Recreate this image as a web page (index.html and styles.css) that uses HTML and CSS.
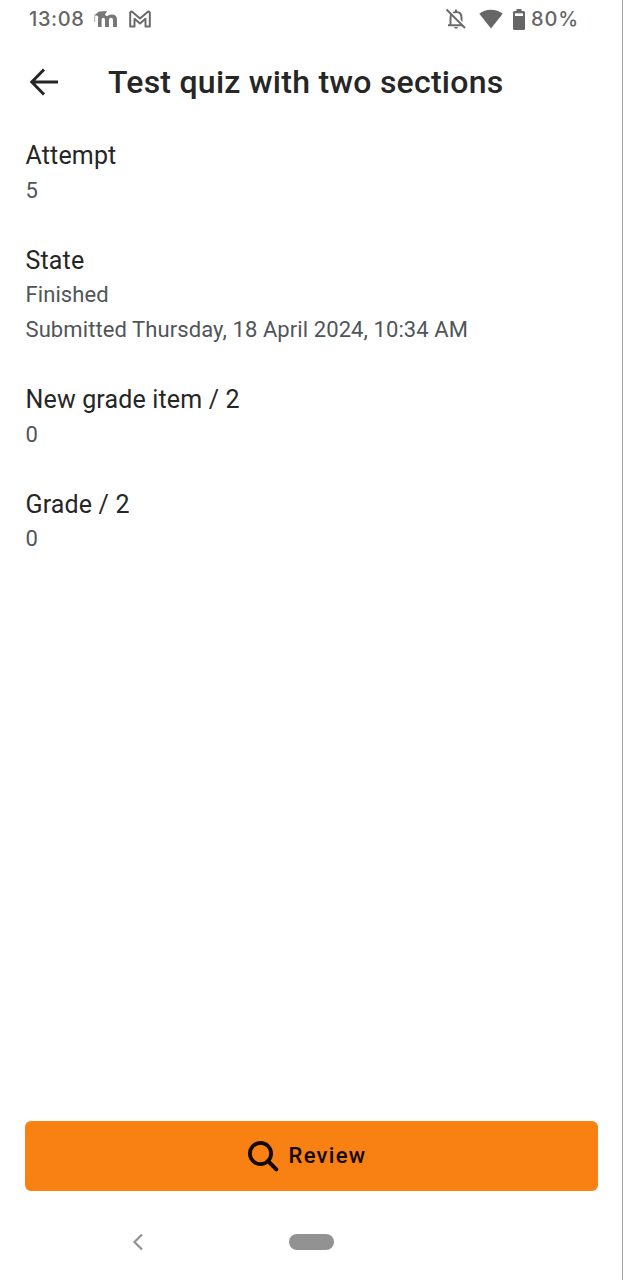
FILE: index.html
```html
<!DOCTYPE html>
<html lang="en">
<head>
  <meta charset="UTF-8" />
  <meta name="viewport" content="width=device-width, initial-scale=1.0" />
  <title>Test quiz with two sections</title>
  <link rel="stylesheet" href="styles.css">
</head>
<body>
  <div class="screen">
    <!-- Status bar -->
    <div class="status-bar">
      <span class="clock">13:08</span>
      <svg class="icon-moodle" width="26" height="18" viewBox="0 0 26 18">
        <path d="M5 17V9q0-4.500 4.600-4.500Q12.300 4.500 14 6.200Q15.800 4.500 18.600 4.500Q24 4.500 24 9.500V17H20V10q0-2.200-2-2.200T16 10V17H12V10q0-2.200-1.700-2.200T8.600 10V17Z" fill="#777"/>
        <path d="M1 5.500 6 1.500 14 1 11.500 5.500Q8 4.500 6 7.500L4 5.500Z" fill="#777"/>
        <path d="M1.700 5.500V12" stroke="#aaa" fill="none"/>
      </svg>
      <svg class="icon-mail" width="24" height="18" viewBox="0 0 24 18">
        <path d="M2.200 16.500V3.200Q2.200 1.500 3.800 1.500L12 8.500 20.200 1.500Q21.800 1.500 21.800 3.200V16.500H17.500V8.800L12 13.500 6.500 8.800V16.500Z" fill="none" stroke="#6b6b6b" stroke-width="2" stroke-linejoin="round"/>
      </svg>
      <div class="status-right">
        <svg class="icon-bell" width="22" height="22" viewBox="0 0 22 22">
          <path d="M5.500 17V10Q5.500 4.500 11 4T16.500 10V17M3 17.200H19M11 1.500V4" fill="none" stroke="#6b6b6b" stroke-width="2"/>
          <path d="M9 19H13Q12.600 20.700 11 20.700T9 19Z" fill="#6b6b6b"/>
          <path d="M2.800.8 21 19" stroke="#fff" stroke-width="2"/>
          <path d="M1.500 1.500 20 20" stroke="#6b6b6b" stroke-width="2"/>
        </svg>
        <svg class="icon-wifi" width="24" height="20" viewBox="0 0 24 20">
          <path d="M.3 4.800Q5.200.7 12 .7T23.700 4.800L12 19.500Z" fill="#666"/>
        </svg>
        <svg class="icon-battery" width="12" height="21" viewBox="0 0 12 21">
          <path d="M3.500 0H8.500V2H10.500Q12 2 12 3.500V19.500Q12 21 10.500 21H1.500Q0 21 0 19.500V3.500Q0 2 1.500 2H3.500Z" fill="#666"/>
          <path d="M2 4.300H10V7H2Z" fill="#fff"/>
        </svg>
        <span class="percent">80%</span>
      </div>
    </div>

    <!-- Header -->
    <header class="header">
      <svg class="back" width="30" height="30" viewBox="0 0 30 30">
        <path d="M15 2.500 2.800 15 15 27.500M3 15H29" fill="none" stroke="#262626" stroke-width="3"/>
      </svg>
      <h1 class="title">Test quiz with two sections</h1>
    </header>

    <!-- Attempt details -->
    <main class="details">
      <div class="item">
        <p class="label">Attempt</p>
        <p class="value">5</p>
      </div>
      <div class="item">
        <p class="label">State</p>
        <p class="value">Finished</p>
        <p class="value">Submitted Thursday, 18 April 2024, 10:34 AM</p>
      </div>
      <div class="item">
        <p class="label">New grade item / 2</p>
        <p class="value">0</p>
      </div>
      <div class="item">
        <p class="label">Grade / 2</p>
        <p class="value">0</p>
      </div>
    </main>

    <button class="review-btn">
      <svg class="icon-search" width="32" height="32" viewBox="0 0 32 32">
        <circle cx="12.500" cy="13.500" r="10.600" fill="none" stroke="#120900" stroke-width="3.800"/>
        <path d="M20 21 28.300 29.300" stroke="#120900" stroke-width="4" stroke-linecap="round"/>
      </svg>
      <span class="review-text">Review</span>
    </button>

    <!-- System navigation -->
    <nav class="nav-bar">
      <svg class="nav-back" width="12" height="18" viewBox="0 0 12 18">
        <path d="M10 1.500 2.500 9 10 16.500" fill="none" stroke="#929292" stroke-width="2.200"/>
      </svg>
      <div class="nav-home"></div>
    </nav>
  </div>
</body>
</html>
```
FILE: styles.css
```css
/* Reset & base */
html, body {
  margin: 0; padding: 0;
  width: 100%; height: 100%;
  background: #fff;
  font-family: Roboto, sans-serif;
}
.screen {
  display: flex; flex-direction: column;
  box-sizing: border-box;
  height: 100%;
  border-right: 1px solid #a5a5a5;
  overflow: hidden;
}
svg { display: block; flex: none; }
/* Status bar */
.status-bar {
  display: flex; align-items: center;
  height: 38px;
  padding: 0 0 0 29px;
  font-family: Inter, sans-serif;
  font-size: 20px;
  font-weight: 450;
  color: #666;
}
.clock { width: 64px; letter-spacing: 0.6px; }
.icon-mail { margin-left: 9px; }
.status-right {
  display: flex; align-items: center;
  width: 177px;
  margin-left: auto;
}
.icon-wifi { margin-left: 12px; }
.icon-battery { margin: 0 6px 0 10px; }
.percent { letter-spacing: 0.9px; }
/* Header */
.header {
  display: flex; align-items: center;
  height: 88px;
  padding-left: 29px;
}
.title {
  margin: 0 0 0 49px;
  font-size: 32px; font-weight: 500;
  letter-spacing: 0.25px;
  color: #262626;
}
/* Attempt details */
.details {
  display: flex; flex-direction: column;
  flex: 1;
  gap: 35px;
  padding: 13px 25px 0 25.500px;
}
.label, .value {
  margin: 0;
  line-height: 34.8px;
}
.label { font-size: 25px; letter-spacing: 0.15px; color: #262626; }
.value { font-size: 22px; letter-spacing: 0.09px; color: #50555a; }
/* Review button */
.review-btn {
  display: flex; align-items: center; justify-content: center;
  gap: 9px;
  height: 70px;
  margin: 0 24px 0 25px;
  padding: 0 9px 0 0;
  border: none; border-radius: 6px;
  background: #f98012;
  color: #120900;
  font-family: inherit;
  font-size: 22px; font-weight: 500;
  letter-spacing: 1.3px;
}
.review-text { padding-bottom: 2px; }
/* System navigation */
.nav-bar {
  display: flex; align-items: center;
  height: 89px;
  padding: 12px 0 0 132px;
  box-sizing: border-box;
}
.nav-home {
  width: 45px; height: 16px;
  margin-left: 145px;
  border-radius: 8px;
  background: #929292;
}
```
